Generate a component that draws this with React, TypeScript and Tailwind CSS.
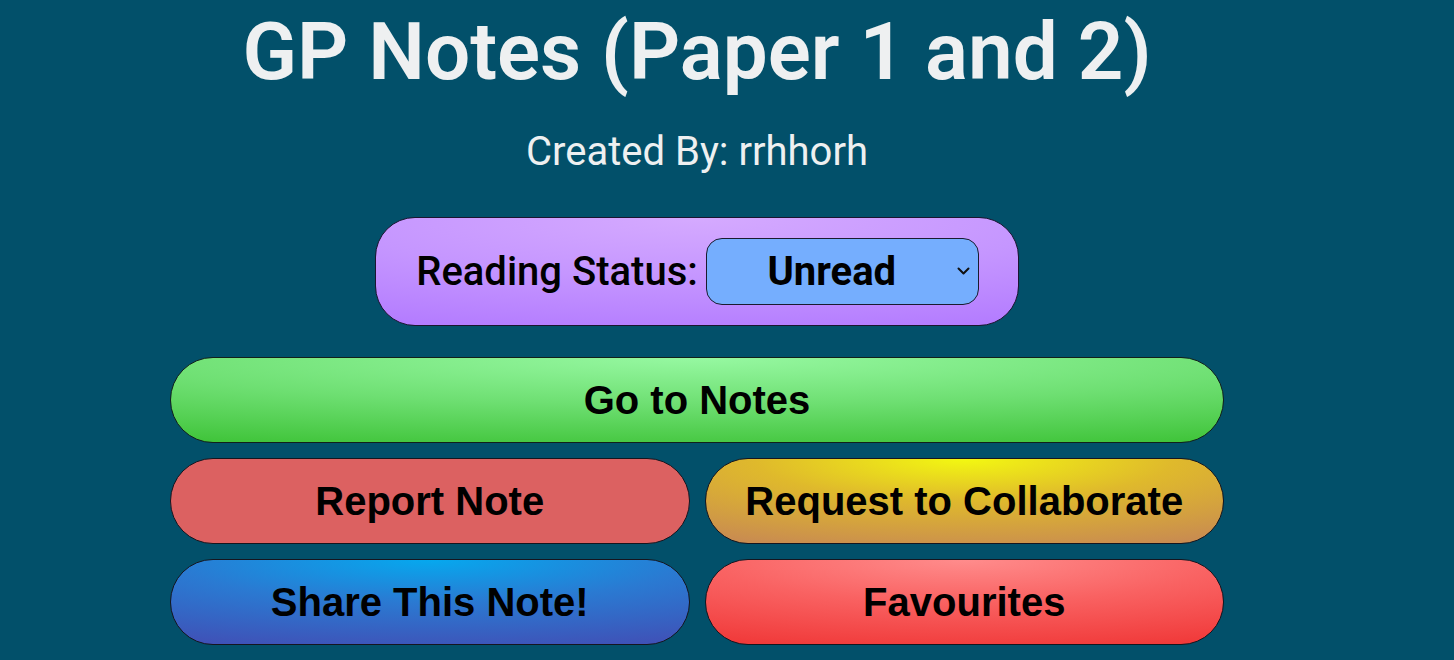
import { useState } from "react";

type Action = {
  label: string;
  bg: string; // full tailwind class for the fill
};

const actions: Action[] = [
  { label: "Report Note", bg: "bg-[#dc6161]" },
  {
    label: "Request to Collaborate",
    bg: "bg-[radial-gradient(ellipse_90%_110%_at_50%_0%,#f3f811_0%,#dfb92c_45%,#c98c50_100%)]",
  },
  {
    label: "Share This Note!",
    bg: "bg-[radial-gradient(ellipse_110%_110%_at_50%_0%,#06a8ee_0%,#2a7ad2_45%,#4050b6_100%)]",
  },
  {
    label: "Favourites",
    bg: "bg-[radial-gradient(ellipse_110%_110%_at_50%_0%,#ff8c8c_0%,#f96262_45%,#f03838_100%)]",
  },
];

export default function App() {
  const [status, setStatus] = useState("unread");

  return (
    <div className="min-h-[660px] w-full bg-[#02506a] font-['Roboto',sans-serif]">
      <div className="ml-[170px] flex w-[1054px] flex-col items-center pt-[7px]">
        <h1 className="text-[80px] font-semibold leading-[90px] text-[#eef0f1]">
          GP Notes (Paper 1 and 2)
        </h1>
        <p className="mt-[33px] text-[40px] leading-[44px] text-[#eef0f1]">
          Created By: rrhhorh
        </p>

        {/* reading status pill */}
        <div className="mt-[43px] flex items-center gap-[8px] rounded-[40px] border border-[#1b1530] bg-[radial-gradient(ellipse_110%_110%_at_50%_0%,#d5aaff_0%,#c596ff_50%,#b37bff_100%)] py-[20px] pl-[40px] pr-[39px]">
          <span className="text-[40px] font-medium leading-[47px] text-black">
            Reading Status:
          </span>
          <div className="relative">
            <select
              value={status}
              onChange={(e) => setStatus(e.target.value)}
              className="h-[67px] w-[273px] appearance-none rounded-[16px] border border-[#1b1b2e] bg-[#75aefe] pl-[10px] pr-[31px] text-center text-[40px] font-bold text-black outline-none"
            >
              <option value="unread">Unread</option>
              <option value="reading">Reading</option>
              <option value="read">Read</option>
            </select>
            <svg
              className="pointer-events-none absolute right-[9px] top-[28px] h-[10px] w-[13px]"
              viewBox="0 0 13 10"
              fill="none"
              stroke="#111"
              strokeWidth="2"
              strokeLinecap="round"
              strokeLinejoin="round"
            >
              <path d="M1.5 2.5 L6.5 7.5 L11.5 2.5" />
            </svg>
          </div>
        </div>

        <div className="mt-[31px] flex w-full flex-col gap-[15px] font-['Liberation_Sans',Arial,sans-serif]">
          <button className="h-[86px] w-full rounded-full border border-[#12201a] bg-[radial-gradient(ellipse_110%_110%_at_50%_0%,#96f8a1_0%,#6edf72_50%,#40c43a_100%)] text-[40px] font-bold text-black">
            Go to Notes
          </button>
          <div className="grid grid-cols-2 gap-[15px]">
            {actions.map((a) => (
              <button
                key={a.label}
                className={`h-[86px] rounded-full border border-[#15151f] text-[40px] font-bold text-black ${a.bg}`}
              >
                {a.label}
              </button>
            ))}
          </div>
        </div>
      </div>
    </div>
  );
}
